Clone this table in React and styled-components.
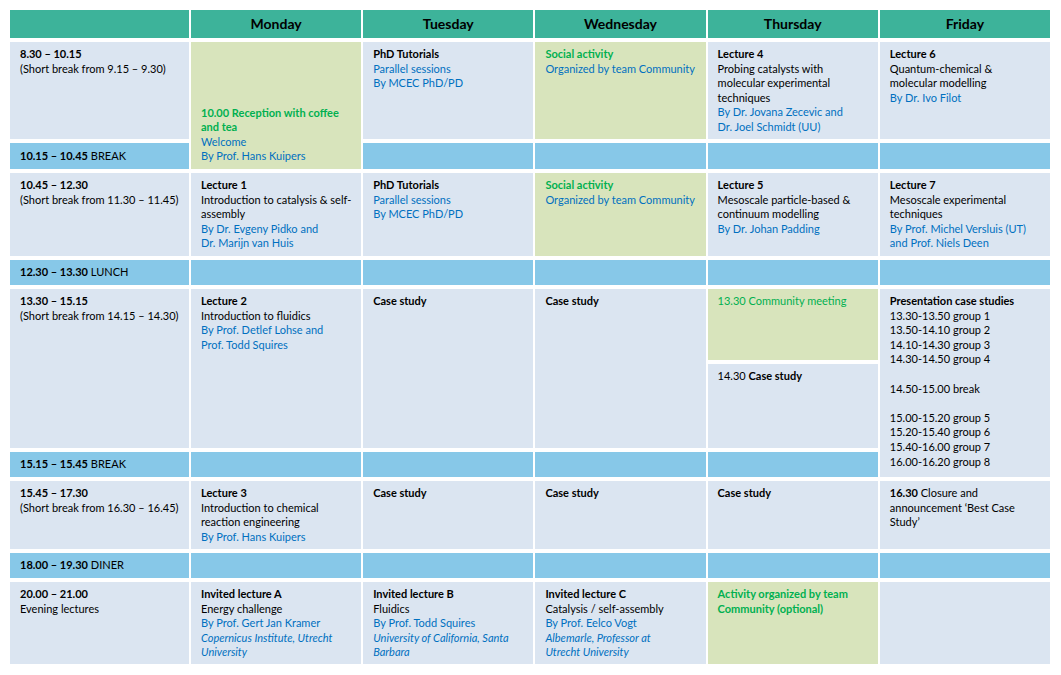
import styled, { createGlobalStyle } from "styled-components";

const GlobalStyle = createGlobalStyle`
  html, body {
    margin: 0;
    padding: 0;
    background: #ffffff;
  }
  body {
    font-family: Lato, "Open Sans", "Liberation Sans", sans-serif;
  }
`;

const Page = styled.div`
  padding: 10px 11px 10px 10px;
`;

const Timetable = styled.div`
  display: grid;
  grid-template-columns: 179px repeat(5, 1fr);
  grid-template-rows: 28px 97px 26px 83px 25px 71px 84px 25px 68px 25px 82px;
  column-gap: 2px;
  row-gap: 4px;
  width: 1040px;
`;

const tones = {
  head: "#3db39a",
  slot: "#dbe5f1",
  pause: "#87c8e8",
  social: "#d8e4bc",
};

const Cell = styled.div`
  grid-column: ${(p) => p.$col} / span 1;
  grid-row: ${(p) => p.$row} / span ${(p) => p.$span || 1};
  background: ${(p) => tones[p.$tone || "slot"]};
  padding: 5px 9px 0 10px;
  font-size: 11px;
  line-height: 14.6px;
  color: #000;
  display: flex;
  flex-direction: column;
  justify-content: ${(p) => (p.$bottom ? "flex-end" : "flex-start")};
  padding-bottom: ${(p) => (p.$bottom ? "5px" : "0")};
`;

const DayHead = styled(Cell)`
  justify-content: center;
  align-items: center;
  padding: 0;
  font-size: 14px;
  font-weight: 700;
`;

const PauseCell = styled(Cell)`
  justify-content: center;
  padding-top: 0;
`;

const Line = styled.div`
  color: ${(p) => (p.$kind === "by" ? "#0070c0" : p.$kind === "green" ? "#00b050" : "#000")};
  font-weight: ${(p) => (p.$bold ? 700 : 400)};
  font-style: ${(p) => (p.$italic ? "italic" : "normal")};
  min-height: 14.6px;
  white-space: nowrap;
`;

const B = styled.b`
  font-weight: 700;
`;

const days = ["Monday", "Tuesday", "Wednesday", "Thursday", "Friday"];

const Time = ({ row, span, from, note }) => (
  <Cell $col={1} $row={row} $span={span}>
    <Line $bold>{from}</Line>
    <Line>{note}</Line>
  </Cell>
);

const Pause = ({ row, label, word, cols = [2, 3, 4, 5, 6] }) => (
  <>
    <PauseCell $col={1} $row={row} $tone="pause">
      <Line>
        <B>{label}</B> {word}
      </Line>
    </PauseCell>
    {cols.map((c) => (
      <PauseCell key={c} $col={c} $row={row} $tone="pause" />
    ))}
  </>
);

const Lecture = ({ col, row, span, tone, title, topic, by, where }) => (
  <Cell $col={col} $row={row} $span={span} $tone={tone}>
    {title && <Line $bold>{title}</Line>}
    {(topic || []).map((t) => (
      <Line key={t}>{t}</Line>
    ))}
    {(by || []).map((t) => (
      <Line key={t} $kind="by">
        {t}
      </Line>
    ))}
    {(where || []).map((t) => (
      <Line key={t} $kind="by" $italic>
        {t}
      </Line>
    ))}
  </Cell>
);

const Social = ({ col, row }) => (
  <Cell $col={col} $row={row} $tone="social">
    <Line $kind="green" $bold>
      Social activity
    </Line>
    <Line $kind="by">Organized by team Community</Line>
  </Cell>
);

const PhdTutorials = ({ row }) => (
  <Lecture col={3} row={row} title="PhD Tutorials" by={["Parallel sessions", "By MCEC PhD/PD"]} />
);

const CaseStudy = ({ col, row, span }) => (
  <Cell $col={col} $row={row} $span={span}>
    <Line $bold>Case study</Line>
  </Cell>
);

const presentations = [
  "13.30-13.50 group 1",
  "13.50-14.10 group 2",
  "14.10-14.30 group 3",
  "14.30-14.50 group 4",
  "",
  "14.50-15.00 break",
  "",
  "15.00-15.20 group 5",
  "15.20-15.40 group 6",
  "15.40-16.00 group 7",
  "16.00-16.20 group 8",
];

export default function App() {
  return (
    <Page>
      <GlobalStyle />
      <Timetable>
        <DayHead $col={1} $row={1} $tone="head" />
        {days.map((d, i) => (
          <DayHead key={d} $col={i + 2} $row={1} $tone="head">
            {d}
          </DayHead>
        ))}

        {/* morning block */}
        <Time row={2} from="8.30 – 10.15" note="(Short break from 9.15 – 9.30)" />
        <Cell $col={2} $row={2} $span={2} $tone="social" $bottom>
          <Line $kind="green" $bold>
            10.00 Reception with coffee
          </Line>
          <Line $kind="green" $bold>
            and tea
          </Line>
          <Line $kind="by">Welcome</Line>
          <Line $kind="by">By Prof. Hans Kuipers</Line>
        </Cell>
        <PhdTutorials row={2} />
        <Social col={4} row={2} />
        <Lecture
          col={5}
          row={2}
          title="Lecture 4"
          topic={["Probing catalysts with", "molecular experimental", "techniques"]}
          by={["By Dr. Jovana Zecevic and", "Dr. Joel Schmidt (UU)"]}
        />
        <Lecture
          col={6}
          row={2}
          title="Lecture 6"
          topic={["Quantum-chemical &", "molecular modelling"]}
          by={["By Dr. Ivo Filot"]}
        />

        <Pause row={3} label="10.15 – 10.45" word="BREAK" cols={[3, 4, 5, 6]} />

        <Time row={4} from="10.45 – 12.30" note="(Short break from 11.30 – 11.45)" />
        <Lecture
          col={2}
          row={4}
          title="Lecture 1"
          topic={["Introduction  to catalysis & self-", "assembly"]}
          by={["By Dr. Evgeny Pidko and", "Dr. Marijn van Huis"]}
        />
        <PhdTutorials row={4} />
        <Social col={4} row={4} />
        <Lecture
          col={5}
          row={4}
          title="Lecture 5"
          topic={["Mesoscale particle-based &", "continuum  modelling"]}
          by={["By Dr. Johan Padding"]}
        />
        <Lecture
          col={6}
          row={4}
          title="Lecture 7"
          topic={["Mesoscale experimental", "techniques"]}
          by={["By Prof. Michel Versluis (UT)", "and Prof. Niels Deen"]}
        />

        <Pause row={5} label="12.30 – 13.30" word="LUNCH" />

        {/* afternoon block */}
        <Time row={6} span={2} from="13.30 – 15.15" note="(Short break from 14.15 – 14.30)" />
        <Lecture
          col={2}
          row={6}
          span={2}
          title="Lecture 2"
          topic={["Introduction  to fluidics"]}
          by={["By Prof. Detlef Lohse and", "Prof. Todd  Squires"]}
        />
        <CaseStudy col={3} row={6} span={2} />
        <CaseStudy col={4} row={6} span={2} />
        <Cell $col={5} $row={6} $tone="social">
          <Line $kind="green">13.30 Community  meeting</Line>
        </Cell>
        <Cell $col={5} $row={7}>
          <Line>
            14.30 <B>Case study</B>
          </Line>
        </Cell>
        <Cell $col={6} $row={6} $span={3}>
          <Line $bold>Presentation  case studies</Line>
          {presentations.map((p, i) => (
            <Line key={i}>{p}</Line>
          ))}
        </Cell>

        <Pause row={8} label="15.15 – 15.45" word="BREAK" cols={[2, 3, 4, 5]} />

        <Time row={9} from="15.45 – 17.30" note="(Short break from 16.30 – 16.45)" />
        <Lecture
          col={2}
          row={9}
          title="Lecture 3"
          topic={["Introduction  to chemical", "reaction engineering"]}
          by={["By Prof. Hans Kuipers"]}
        />
        <CaseStudy col={3} row={9} />
        <CaseStudy col={4} row={9} />
        <CaseStudy col={5} row={9} />
        <Cell $col={6} $row={9}>
          <Line>
            <B>16.30</B> Closure and
          </Line>
          <Line>announcement ‘Best Case</Line>
          <Line>Study’</Line>
        </Cell>

        <Pause row={10} label="18.00 – 19.30" word="DINER" />

        {/* evening block */}
        <Time row={11} from="20.00 – 21.00" note="Evening lectures" />
        <Lecture
          col={2}
          row={11}
          title="Invited lecture A"
          topic={["Energy challenge"]}
          by={["By Prof. Gert Jan Kramer"]}
          where={["Copernicus Institute, Utrecht", "University"]}
        />
        <Lecture
          col={3}
          row={11}
          title="Invited lecture B"
          topic={["Fluidics"]}
          by={["By Prof. Todd Squires"]}
          where={["University of California, Santa", "Barbara"]}
        />
        <Lecture
          col={4}
          row={11}
          title="Invited lecture C"
          topic={["Catalysis / self-assembly"]}
          by={["By Prof. Eelco Vogt"]}
          where={["Albemarle, Professor at", "Utrecht University"]}
        />
        <Cell $col={5} $row={11} $tone="social">
          <Line $kind="green" $bold>
            Activity organized by team
          </Line>
          <Line $kind="green" $bold>
            Community (optional)
          </Line>
        </Cell>
        <Cell $col={6} $row={11} />
      </Timetable>
    </Page>
  );
}
